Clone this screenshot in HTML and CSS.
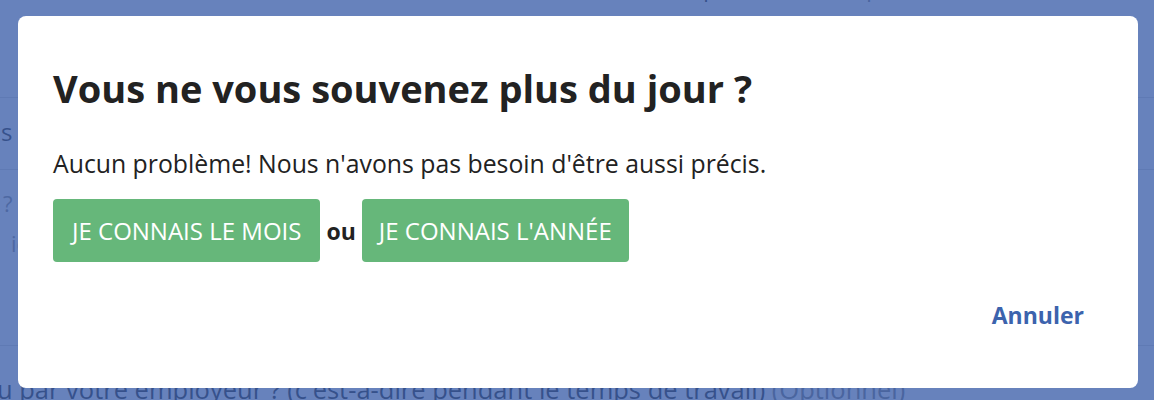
FILE: index.html
```html
<!DOCTYPE html>
<html lang="fr">
<head>
    <meta charset="UTF-8">
    <meta name="viewport" content="width=device-width, initial-scale=1.0">
    <title>Date de début</title>
    <link rel="stylesheet" href="styles.css">
</head>
<body>
    <div class="page">
        <div class="row row-top">
            <span class="label">Horaire partiel actuel</span> <span class="hint">(Optionnel)</span>
        </div>
        <div class="row row-question">
            <span class="label">s heures</span>
        </div>
        <div class="row row-answer">
            <div class="hint">?</div>
            <div class="hint indent">ici</div>
        </div>
        <div class="row row-bottom">
            <span class="label">u par votre employeur ? (c'est-à-dire pendant le temps de travail)</span> <span class="hint">(Optionnel)</span>
        </div>
    </div>

    <div class="overlay">
        <div class="modal">
            <h1 class="modal-title">Vous ne vous souvenez plus du jour ?</h1>
            <p class="modal-text">Aucun problème! Nous n'avons pas besoin d'être aussi précis.</p>
            <div class="choices">
                <button class="btn-green">JE CONNAIS LE MOIS</button>
                <span class="or">ou</span>
                <button class="btn-green btn-year">JE CONNAIS L'ANNÉE</button>
            </div>
            <div class="actions">
                <button class="btn-link">Annuler</button>
            </div>
        </div>
    </div>
</body>
</html>
```

FILE: styles.css
```css
body {
    margin: 0;
    font-family: "Open Sans", sans-serif;
    color: #222;
    background: #fff;
    overflow: hidden;
}

/* page behind the dialog */
.page {
    font-size: 22px;
    color: #555;
    overflow: hidden;
    height: 400px;
}
.row {
    border-bottom: 1px solid #ddd;
    white-space: nowrap;
}
.label {
    color: #3f3f3f;
}
.hint {
    color: #8a8a8a;
}
.row-top {
    height: 124px;
    margin-top: -27px;
    padding-left: 620px;
}
.row-question {
    height: 72px;
    padding-top: 17px;
    box-sizing: border-box;
    font-size: 24px;
    padding-left: 1px;
}
.row-answer {
    height: 176px;
    box-sizing: border-box;
    padding-top: 13px;
    padding-left: 3px;
    line-height: 40px;
}
.row-answer .hint {
    color: #999;
}
.indent {
    padding-left: 8px;
}
.row-bottom {
    border-bottom: none;
    padding-top: 26px;
    margin-left: -3px;
    font-size: 25.5px;
}

/* dialog */
.overlay {
    position: fixed;
    top: 0;
    left: 0;
    right: 0;
    bottom: 0;
    background: rgba(52, 88, 165, 0.75);
    display: flex;
    justify-content: center;
    align-items: flex-start;
    padding-top: 16px;
    padding-left: 2px;
}
.modal {
    width: 1120px;
    box-sizing: border-box;
    background: #fff;
    border-radius: 8px;
    padding: 50px 35px 47px;
}
.modal-title {
    margin: 0;
    font-size: 38px;
    font-weight: 700;
    line-height: 1.2;
    color: #222;
}
.modal-text {
    margin: 34px 0 0;
    font-size: 24.8px;
    line-height: 1.4;
}
.choices {
    margin-top: 19px;
    display: flex;
    align-items: center;
    gap: 6px;
}
.btn-green {
    font-family: "Open Sans", sans-serif;
    font-size: 24px;
    line-height: 1.5;
    color: #fff;
    background: #66b77a;
    border: none;
    border-radius: 4px;
    padding: 13.5px 19px;
}
.btn-year {
    padding: 13.5px 17px;
}
.or {
    font-size: 23px;
    font-weight: 700;
}
.actions {
    margin-top: 28px;
    display: flex;
    justify-content: flex-end;
}
.btn-link {
    font-family: "Open Sans", sans-serif;
    font-size: 23px;
    font-weight: 700;
    line-height: 1.5;
    color: #3c63ad;
    background: none;
    border: none;
    padding: 8px 19px;
}
```
